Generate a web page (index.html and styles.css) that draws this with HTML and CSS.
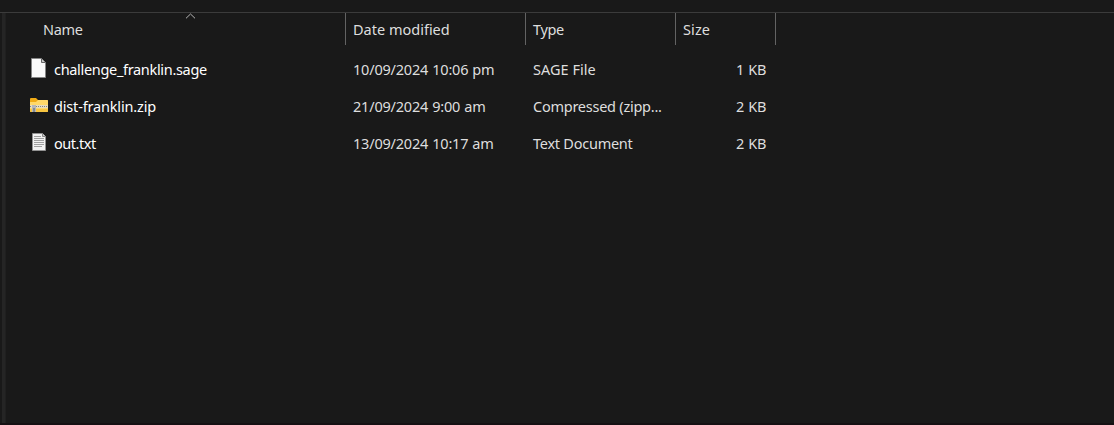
FILE: index.html
```html
<!DOCTYPE html>
<html lang="en">
<head>
<meta charset="utf-8">
<title>Files</title>
<link rel="stylesheet" href="styles.css">
</head>
<body>
<div class="window">
  <div class="toolbar"></div>
  <div class="body">
    <div class="splitter"></div>
    <main class="files">
      <div class="row header">
        <div class="cell name"><span>Name</span>
          <svg class="sort" width="11" height="6" viewBox="0 0 11 6"><path d="M1 5.300 5.500 1 10 5.300" fill="none" stroke="#b4b4b4" stroke-width="1"/></svg>
        </div>
        <div class="cell date"><span>Date modified</span></div>
        <div class="cell type"><span>Type</span></div>
        <div class="cell size"><span>Size</span></div>
      </div>
      <div class="row item">
        <div class="cell name">
          <svg class="icon" width="20" height="20" viewBox="0 0 20 20"><path d="M1.500.500h10l4 4v15h-14z" fill="#fafafa" stroke="#858585"/><path d="M11.500 1v4h4z" fill="#c8c8c8"/><path d="M11.500.500v4h4" fill="none" stroke="#666"/></svg>
          <span class="sage-name">challenge_franklin.sage</span>
        </div>
        <div class="cell date"><span>10/09/2024 10:06 pm</span></div>
        <div class="cell type"><span class="sage-type">SAGE File</span></div>
        <div class="cell size"><span>1 KB</span></div>
      </div>
      <div class="row item">
        <div class="cell name">
          <svg class="icon" width="20" height="20" viewBox="0 0 20 20"><path d="M0 4q0-1 1-1h5l2 2h9q1 0 1 1v3H0z" fill="#f0ab16"/><path d="M0 7h6l2-2h9q1 0 1 1v10q0 1-1 1H1q-1 0-1-1z" fill="#ffd869"/><path d="M0 14h18v2q0 1-1 1H1q-1 0-1-1z" fill="#f8c541"/><path d="M0 11.500h18" stroke="#e6dcc0" stroke-width="3"/><path d="M0 11.500h18" stroke="#85837b" stroke-dasharray="1 1"/><path d="M2 10h4v7H2z" fill="#b5b7b9"/><path d="M3 13h2v4H3z" fill="#858a8d"/></svg>
          <span class="zip-name">dist-franklin.zip</span>
        </div>
        <div class="cell date"><span>21/09/2024 9:00 am</span></div>
        <div class="cell type"><span>Compressed (zipp...</span></div>
        <div class="cell size"><span>2 KB</span></div>
      </div>
      <div class="row item">
        <div class="cell name">
          <svg class="icon" width="20" height="20" viewBox="0 0 20 20"><path d="M2.500 1.500h10l3 3v14h-13z" fill="#f2f2f2" stroke="#929292"/><path d="M12.500 1.500v3h3" fill="#ccc" stroke="#888"/><path d="M4 4.500h7M4 6.500h10M4 8.500h10M4 10.500h10M4 12.500h10M4 14.500h8" stroke="#a0a0a0"/></svg>
          <span class="txt-name">out.txt</span>
        </div>
        <div class="cell date"><span>13/09/2024 10:17 am</span></div>
        <div class="cell type"><span>Text Document</span></div>
        <div class="cell size"><span>2 KB</span></div>
      </div>
    </main>
  </div>
  <div class="bottom"></div>
</div>
</body>
</html>
```
FILE: styles.css
```css
* { box-sizing: border-box; }
body { margin: 0; background: #191919; color: #dedede; font: 14.5px/20px "Noto Sans", "Open Sans", sans-serif; letter-spacing: -0.35px; }
.window { height: 425px; display: flex; flex-direction: column; overflow: hidden; }
.toolbar { height: 13px; border-bottom: 1px solid #3b3b3b; }
.body { flex: 1; display: flex; }
.splitter { width: 4px; margin-left: 2px; background: #252525; border-right: 1px solid #202020; }
.bottom { height: 2px; background: #151013; }
.files { flex: 1; }
.row { display: grid; grid-template-columns: 340px 180px 150px 100px; height: 37px; align-items: center; }
.cell { display: flex; align-items: center; white-space: nowrap; padding-left: 7px; }
.header { height: 32px; margin-bottom: 5px; }
.header .cell { height: 32px; border-right: 1px solid #636363; }
.header .name { position: relative; padding-left: 37px; }
.header .date { letter-spacing: 0; }
.header .size { letter-spacing: 0.1px; }
.sort { position: absolute; left: 179px; top: 0; }
.item .name { padding-left: 24px; color: #fff; }
.icon { flex: none; margin-right: 4px; position: relative; top: -1px; }
.item .date { letter-spacing: -0.2px; word-spacing: 0.5px; }
.item .type { letter-spacing: -0.25px; }
.item .type .sage-type { letter-spacing: 0.03px; }
.sage-name { letter-spacing: -0.32px; }
.zip-name { letter-spacing: -0.17px; }
.txt-name { letter-spacing: -0.45px; }
.item .size { justify-content: flex-end; padding-right: 10px; word-spacing: 1px; }
```
